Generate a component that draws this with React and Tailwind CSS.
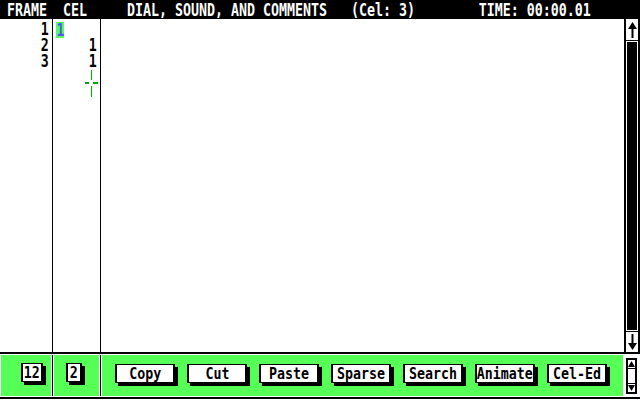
import React from 'react'

const frames = ['1', '2', '3']
const buttons = ['Copy', 'Cut', 'Paste', 'Sparse', 'Search', 'Animate', 'Cel-Ed']

function Arrow({ down }) {
  return (
    <svg width="9" height="16" viewBox="0 0 9 16" className={down ? 'rotate-180' : ''}>
      <polygon points="4.5,0 9,7 0,7" fill="#000" />
      <rect x="3.5" y="6" width="2" height="10" fill="#000" />
    </svg>
  )
}

function Button({ label, w }) {
  return (
    <div className={`${w} h-[19px] bg-white border-x-2 border-y border-black shadow-[3px_3px_0_0_#000] flex items-center justify-center leading-[16px] text-[16px]`}>
      <span className="inline-block origin-center scale-x-[0.83] whitespace-pre">{label}</span>
    </div>
  )
}

export default function App() {
  return (
    <div className="relative w-[640px] h-[400px] overflow-hidden bg-white text-black font-['DejaVu_Sans_Mono',monospace] font-bold">
      {/* title bar */}
      <div className="h-[19px] bg-black text-white pl-[7px] text-[18px] leading-[19px] whitespace-pre">
        <span className="inline-block origin-left scale-x-[0.738]">
          {'FRAME  CEL     DIAL, SOUND, AND COMMENTS   (Cel: 3)        TIME: 00:00.01'}
        </span>
      </div>

      {/* sheet */}
      <div className="flex h-[333px]">
        <div className="w-[53px] border-r border-black pt-[2px] pr-[3px] text-right text-[18px] leading-[16px]">
          {frames.map((f) => (
            <div key={f} className="h-[16px]">
              <span className="inline-block origin-right scale-x-[0.738]">{f}</span>
            </div>
          ))}
        </div>
        <div className="w-[48px] border-r border-black pt-[2px] pr-[3px] text-[18px] leading-[16px]">
          <div className="h-[16px] pl-[3px] pt-[1px]">
            <div className="w-[8px] h-[16px] bg-[#55ff55] text-[#5555ff] flex justify-center">
              <span className="inline-block origin-center scale-x-[0.738]">1</span>
            </div>
          </div>
          <div className="h-[16px] text-right">
            <span className="inline-block origin-right scale-x-[0.738]">1</span>
          </div>
          <div className="h-[16px] text-right">
            <span className="inline-block origin-right scale-x-[0.738]">1</span>
          </div>
        </div>
        <div className="flex-1 bg-white" />
        <div className="w-[16px] border-x-2 border-black flex flex-col">
          <div className="h-[22px] border-b border-black flex items-center justify-center">
            <Arrow />
          </div>
          <div className="flex-1 bg-white px-[1px] pt-[1px] pb-[1px]">
            <div className="h-full bg-black" />
          </div>
          <div className="h-[21px] border-t border-black flex items-center justify-center">
            <Arrow down />
          </div>
        </div>
      </div>

      <div className="h-[2px] bg-black" />

      {/* control strip */}
      <div className="h-[45px] flex flex-col">
        <div className="h-[42px] pt-[1px] flex">
          <div className="ml-[1px] w-[50px] bg-[#55ff55] pl-[20px] pt-[8px]">
            <Button label="12" w="w-[22px]" />
          </div>
          <div className="w-[1px]" />
          <div className="w-[1px] bg-black" />
          <div className="w-[1px]" />
          <div className="w-[45px] bg-[#55ff55] pl-[12px] pt-[8px]">
            <Button label="2" w="w-[16px]" />
          </div>
          <div className="w-[1px]" />
          <div className="w-[1px] bg-black" />
          <div className="w-[1px]" />
          <div className="w-[521px] bg-[#55ff55] pl-[13px] pt-[9px] flex gap-[12px] items-start">
            {buttons.map((b) => (
              <Button key={b} label={b} w="w-[60px]" />
            ))}
          </div>
          <div className="pl-[3px] pt-[3px]">
            <svg width="11" height="36" viewBox="0 0 11 36">
              <rect x="1" y="1" width="9" height="34" fill="#fff" stroke="#000" strokeWidth="2" />
              <polygon points="5.5,3 9,9 2,9" fill="#000" />
              <rect x="1" y="10" width="9" height="1" fill="#000" />
              <rect x="1" y="25" width="9" height="1" fill="#000" />
              <polygon points="2,27 9,27 5.5,33" fill="#000" />
            </svg>
          </div>
        </div>
        <div className="h-[1px]" />
        <div className="h-[2px] bg-black" />
      </div>

      {/* cel cursor */}
      <svg className="absolute left-[84px] top-[70px]" width="15" height="27" viewBox="0 0 15 27">
        <rect x="7" y="0" width="1" height="10" fill="#00aa00" />
        <rect x="7" y="16" width="1" height="11" fill="#00aa00" />
        <rect x="1" y="12" width="4" height="2" fill="#00aa00" />
        <rect x="9" y="12" width="5" height="2" fill="#00aa00" />
      </svg>
    </div>
  )
}
